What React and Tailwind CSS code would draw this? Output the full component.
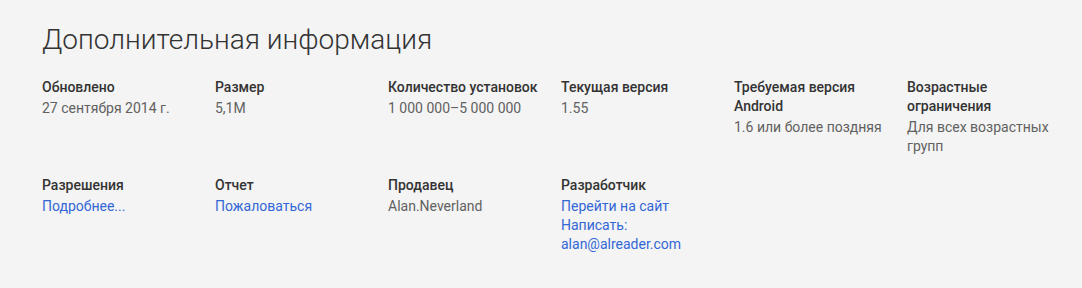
import React from "react";

const items = [
  { label: "Обновлено", values: [{ text: "27 сентября 2014 г." }] },
  { label: "Размер", values: [{ text: "5,1M" }] },
  { label: "Количество установок", values: [{ text: "1 000 000–5 000 000" }] },
  { label: "Текущая версия", values: [{ text: "1.55" }] },
  { label: "Требуемая версия Android", values: [{ text: "1.6 или более поздняя" }] },
  { label: "Возрастные ограничения", values: [{ text: "Для всех возрастных групп" }] },
  { label: "Разрешения", values: [{ text: "Подробнее...", link: true }] },
  { label: "Отчет", values: [{ text: "Пожаловаться", link: true }] },
  { label: "Продавец", values: [{ text: "Alan.Neverland" }] },
  {
    label: "Разработчик",
    values: [
      { text: "Перейти на сайт", link: true },
      { text: "Написать: alan@alreader.com", link: true },
    ],
  },
];

const App = () => {
  return (
    <div className="min-h-[288px] bg-[#f4f4f4] pl-[42px] pr-6 pt-[23px] font-['Roboto',sans-serif]">
      <h1 className="text-[28px] font-light leading-[34px] text-[#333]">Дополнительная информация</h1>
      <section className="mt-[21px] grid grid-cols-[repeat(6,173px)] gap-y-[20px]">
        {items.map((item) => (
          <div key={item.label} className="pr-5 text-[14px] leading-[19px]">
            <div className="font-medium text-[#333]">{item.label}</div>
            <div className="mt-[2px]">
              {item.values.map((v) =>
                v.link ? (
                  <a key={v.text} href="#" className="block text-[#3367d6] hover:underline">
                    {v.text}
                  </a>
                ) : (
                  <div key={v.text} className="text-[#616161]">
                    {v.text}
                  </div>
                )
              )}
            </div>
          </div>
        ))}
      </section>
    </div>
  );
};

export default App;
